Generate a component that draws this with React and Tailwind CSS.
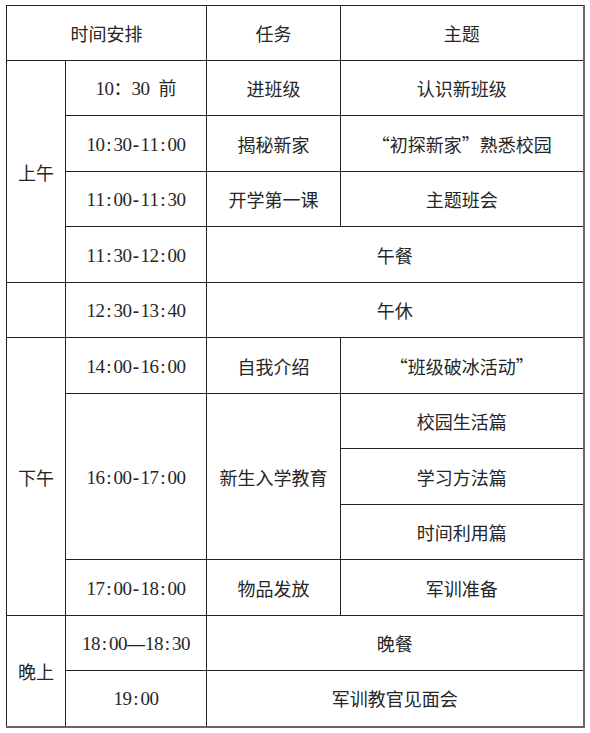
import React from "react";

const cjk = { fontFamily: '"Noto Sans CJK SC", "Noto Sans CJK JP", sans-serif' };
const serif = { fontFamily: '"Liberation Serif", serif' };

function T({ s }) {
  return (
    <span className="inline-flex items-baseline justify-center">
      {Array.from(s).map((c, i) => {
        if (c === "—") {
          return (
            <span key={i} className="inline-block w-[18px] text-center font-bold" style={serif}>
              —
            </span>
          );
        }
        const ascii = c.charCodeAt(0) < 128;
        if (ascii) {
          return (
            <span key={i} className="inline-block w-[9px] text-center text-[19px] font-normal" style={serif}>
              {c === " " ? "\u00a0" : c === "-" ? <b className="font-bold">-</b> : c}
            </span>
          );
        }
        return (
          <span key={i} className="inline-block w-[18px] text-center" style={cjk}>
            {c}
          </span>
        );
      })}
    </span>
  );
}

const td = "border border-[#222] text-center align-middle p-0";

function Row({ h, children }) {
  return <tr className={h}>{children}</tr>;
}

export default function App() {
  return (
    <div className="w-[590px] h-[733px] bg-white text-[#262626] text-[18px] leading-none font-normal" style={cjk}>
      <div className="pt-[5px] pl-[6px]">
        <table className="border-collapse table-fixed w-[577px] border border-[#222] border-r-2 border-b-2 border-r-[#666] border-b-[#666]">
          <colgroup>
            <col className="w-[59px]" />
            <col className="w-[141px]" />
            <col className="w-[134px]" />
            <col className="w-[243px]" />
          </colgroup>
          <tbody>
            <Row h="h-[55px]">
              <td className={td} colSpan={2}>时间安排</td>
              <td className={td}>任务</td>
              <td className={td}>主题</td>
            </Row>
            <Row h="h-[55px]">
              <td className={td} rowSpan={4}>上午</td>
              <td className={td}><T s="10：30 前" /></td>
              <td className={td}>进班级</td>
              <td className={td}>认识新班级</td>
            </Row>
            <Row h="h-[56px]">
              <td className={td}><T s="10:30-11:00" /></td>
              <td className={td}>揭秘新家</td>
              <td className={td}>“初探新家”熟悉校园</td>
            </Row>
            <Row h="h-[55px]">
              <td className={td}><T s="11:00-11:30" /></td>
              <td className={td}>开学第一课</td>
              <td className={td}>主题班会</td>
            </Row>
            <Row h="h-[56px]">
              <td className={td}><T s="11:30-12:00" /></td>
              <td className={td} colSpan={2}>午餐</td>
            </Row>
            <Row h="h-[55px]">
              <td className={td}></td>
              <td className={td}><T s="12:30-13:40" /></td>
              <td className={td} colSpan={2}>午休</td>
            </Row>
            <Row h="h-[56px]">
              <td className={td} rowSpan={5}>下午</td>
              <td className={td}><T s="14:00-16:00" /></td>
              <td className={td}>自我介绍</td>
              <td className={td}>“班级破冰活动”</td>
            </Row>
            <Row h="h-[55px]">
              <td className={td} rowSpan={3}><T s="16:00-17:00" /></td>
              <td className={td} rowSpan={3}>新生入学教育</td>
              <td className={td}>校园生活篇</td>
            </Row>
            <Row h="h-[56px]">
              <td className={td}>学习方法篇</td>
            </Row>
            <Row h="h-[55px]">
              <td className={td}>时间利用篇</td>
            </Row>
            <Row h="h-[56px]">
              <td className={td}><T s="17:00-18:00" /></td>
              <td className={td}>物品发放</td>
              <td className={td}>军训准备</td>
            </Row>
            <Row h="h-[55px]">
              <td className={td} rowSpan={2}>晚上</td>
              <td className={td}><T s="18:00—18:30" /></td>
              <td className={td} colSpan={2}>晚餐</td>
            </Row>
            <Row h="h-[56px]">
              <td className={td}><T s="19:00" /></td>
              <td className={td} colSpan={2}>军训教官见面会</td>
            </Row>
          </tbody>
        </table>
      </div>
    </div>
  );
}
